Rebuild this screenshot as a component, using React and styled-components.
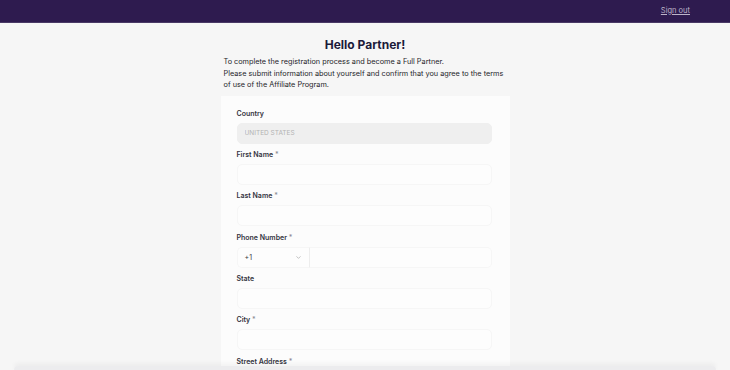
import React from 'react';
import styled, { createGlobalStyle } from 'styled-components';

const GlobalStyle = createGlobalStyle`
  html, body {
    margin: 0;
    padding: 0;
    background: #f6f6f6;
    font-family: Inter, "Noto Sans", "Liberation Sans", sans-serif;
    -webkit-font-smoothing: antialiased;
  }
`;

const fields = [
  { label: 'First Name', required: true },
  { label: 'Last Name', required: true },
  { label: 'Phone Number', required: true, phone: true },
  { label: 'State' },
  { label: 'City', required: true },
  { label: 'Street Address', required: true },
];

const App = () => {
  return (
    <>
      <GlobalStyle />
      <Header>
        <SignOut href="#">Sign out</SignOut>
      </Header>
      <Main>
        <Title>Hello Partner!</Title>
        <Intro>
          To complete the registration process and become a Full Partner.
          <br />
          Please submit information about yourself and confirm that you agree to the terms
          of use of the Affiliate Program.
        </Intro>
        <Card>
          <Field>
            <Label>Country</Label>
            <Input value="UNITED STATES" disabled readOnly $muted />
          </Field>
          {fields.map((f) => (
            <Field key={f.label}>
              <Label>
                {f.label}
                {f.required && <Star> *</Star>}
              </Label>
              {f.phone ? (
                <PhoneRow>
                  <CodeSelect>
                    <span>+1</span>
                    <svg width="7" height="7" viewBox="0 0 24 24" fill="none" stroke="#9a9a9a" strokeWidth="2" strokeLinecap="round" strokeLinejoin="round">
                      <path d="M6 9l6 6 6-6" />
                    </svg>
                  </CodeSelect>
                  <PhoneInput />
                </PhoneRow>
              ) : (
                <Input />
              )}
            </Field>
          ))}
        </Card>
      </Main>
      <BottomBar />
    </>
  );
};

export default App;

const Header = styled.header`
  height: 23px;
  background: #2e1b4f;
  border-bottom: 1px solid #4a3a66;
  display: flex;
  align-items: center;
  justify-content: flex-end;
  padding-right: 40px;
  box-sizing: border-box;
`;

const SignOut = styled.a`
  color: #bcb4c9;
  font-size: 7.5px;
  text-decoration: underline;
  margin-top: -2px;
`;

const Main = styled.main`
  width: 289px;
  margin: 0 auto;
  padding-top: 14px;
  height: 333px;
  overflow: hidden;
`;

const Title = styled.h1`
  margin: 0;
  text-align: center;
  font-size: 12px;
  font-weight: 700;
  line-height: 16px;
  color: #1b1a3a;
`;

const Intro = styled.p`
  margin: 3px 0 0;
  padding: 0 6px 0 3px;
  font-size: 7.3px;
  line-height: 11.5px;
  font-weight: 400;
  color: #1e1e2a;
`;

const Card = styled.section`
  margin-top: 5px;
  background: #fcfcfc;
  padding: 14px 18px 0 16px;
  display: flex;
  flex-direction: column;
  gap: 7.4px;
`;

const Field = styled.div`
  display: flex;
  flex-direction: column;
  gap: 5px;
`;

const Label = styled.label`
  font-size: 7px;
  line-height: 8px;
  font-weight: 600;
  color: #34343f;
`;

const Star = styled.span`
  color: #8a8a94;
  font-weight: 500;
`;

const Input = styled.input`
  box-sizing: border-box;
  width: 100%;
  height: 21px;
  margin: 0;
  padding: 0 7px;
  border: 1px solid ${(p) => (p.$muted ? '#efefef' : '#f6f6f6')};
  border-radius: 5px;
  background: ${(p) => (p.$muted ? '#efefef' : '#fdfdfd')};
  font-family: inherit;
  font-size: 6.5px;
  color: #b3b3b3;
  outline: none;
  &:disabled {
    color: #b3b3b3;
    -webkit-text-fill-color: #b3b3b3;
  }
`;

const PhoneRow = styled.div`
  display: flex;
  height: 21px;
`;

const CodeSelect = styled.div`
  box-sizing: border-box;
  width: 78px;
  display: flex;
  align-items: center;
  justify-content: space-between;
  padding: 0 7px;
  border: 1px solid #f6f6f6;
  border-right: 1px solid #ededed;
  border-radius: 5px 0 0 5px;
  background: #fdfdfd;
  font-size: 7px;
  color: #3a3a44;
`;

const PhoneInput = styled.input`
  flex: 1;
  box-sizing: border-box;
  height: 21px;
  margin: 0;
  border: 1px solid #f6f6f6;
  border-left: none;
  border-radius: 0 5px 5px 0;
  background: #fdfdfd;
  outline: none;
`;

const BottomBar = styled.div`
  position: fixed;
  left: 14px;
  right: 14px;
  bottom: 0;
  height: 4px;
  border-radius: 8px 8px 0 0;
  background: #ececee;
  box-shadow: 0 -2px 5px rgba(0, 0, 0, 0.06);
`;
